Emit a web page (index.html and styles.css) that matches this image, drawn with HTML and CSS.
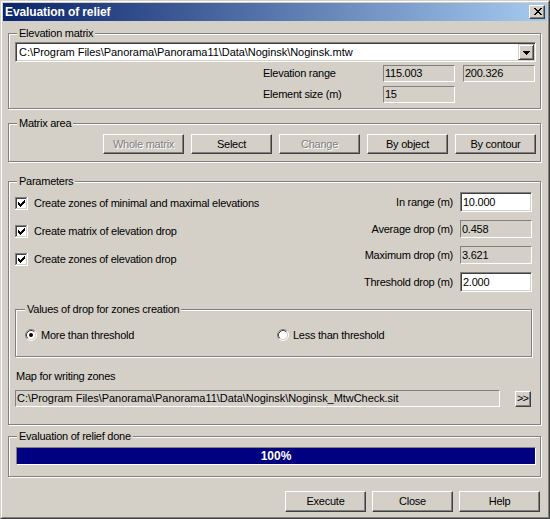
FILE: index.html
```html
<!DOCTYPE html>
<html>
<head>
<meta charset="utf-8">
<title>Evaluation of relief</title>
<link rel="stylesheet" href="styles.css">
</head>
<body>
<div class="window">
 <div class="frame">
  <div class="titlebar">
   <span class="title">Evaluation of relief</span>
   <span class="closebtn"><svg width="8" height="7" viewBox="0 0 8 7"><path d="M0 0h2v1h-2z M6 0h2v1h-2z M1 1h2v1h-2z M5 1h2v1h-2z M2 2h4v1h-4z M3 3h2v1h-2z M2 4h4v1h-4z M1 5h2v1h-2z M5 5h2v1h-2z M0 6h2v1h-2z M6 6h2v1h-2z" fill="#000"/></svg></span>
  </div>
  <div class="client">
   <div class="group g-elev">
    <span class="legend">Elevation matrix</span>
    <div class="combo">
     <span class="combo-text">C:\Program Files\Panorama\Panorama11\Data\Noginsk\Noginsk.mtw</span>
     <span class="combo-btn"><svg width="7" height="4" viewBox="0 0 7 4"><path d="M0 0h7v1h-7z M1 1h5v1h-5z M2 2h3v1h-3z M3 3h1v1h-1z" fill="#000"/></svg></span>
    </div>
    <div class="range-grid">
     <span class="lbl">Elevation range</span><span class="ro">115.003</span><span class="ro">200.326</span>
     <span class="lbl">Element size (m)</span><span class="ro">15</span>
    </div>
   </div>

   <div class="group g-area">
    <span class="legend">Matrix area</span>
    <div class="btnrow">
     <span class="btn disabled">Whole matrix</span>
     <span class="btn">Select</span>
     <span class="btn disabled">Change</span>
     <span class="btn">By object</span>
     <span class="btn">By contour</span>
    </div>
   </div>

   <div class="group g-params">
    <span class="legend">Parameters</span>
    <div class="params-top">
     <div class="checks">
      <div class="check"><svg class="cb" width="13" height="13" viewBox="0 0 13 13"><path d="M0 0H12V1H1V12H0Z" fill="#808080"/><path d="M12 0H13V13H0V12H12Z" fill="#fff"/><path d="M1 1H11V2H2V11H1Z" fill="#404040"/><path d="M11 1H12V12H1V11H11Z" fill="#D4D0C8"/><rect x="2" y="2" width="9" height="9" fill="#fff"/><path d="M9 3h1v1h-1z M8 4h2v1h-2z M3 5h1v1h-1z M7 5h3v1h-3z M3 6h2v1h-2z M6 6h3v1h-3z M3 7h5v1h-5z M4 8h3v1h-3z M5 9h1v1h-1z" fill="#000"/></svg><span>Create zones of minimal and maximal elevations</span></div>
      <div class="check"><svg class="cb" width="13" height="13" viewBox="0 0 13 13"><path d="M0 0H12V1H1V12H0Z" fill="#808080"/><path d="M12 0H13V13H0V12H12Z" fill="#fff"/><path d="M1 1H11V2H2V11H1Z" fill="#404040"/><path d="M11 1H12V12H1V11H11Z" fill="#D4D0C8"/><rect x="2" y="2" width="9" height="9" fill="#fff"/><path d="M9 3h1v1h-1z M8 4h2v1h-2z M3 5h1v1h-1z M7 5h3v1h-3z M3 6h2v1h-2z M6 6h3v1h-3z M3 7h5v1h-5z M4 8h3v1h-3z M5 9h1v1h-1z" fill="#000"/></svg><span>Create matrix of elevation drop</span></div>
      <div class="check"><svg class="cb" width="13" height="13" viewBox="0 0 13 13"><path d="M0 0H12V1H1V12H0Z" fill="#808080"/><path d="M12 0H13V13H0V12H12Z" fill="#fff"/><path d="M1 1H11V2H2V11H1Z" fill="#404040"/><path d="M11 1H12V12H1V11H11Z" fill="#D4D0C8"/><rect x="2" y="2" width="9" height="9" fill="#fff"/><path d="M9 3h1v1h-1z M8 4h2v1h-2z M3 5h1v1h-1z M7 5h3v1h-3z M3 6h2v1h-2z M6 6h3v1h-3z M3 7h5v1h-5z M4 8h3v1h-3z M5 9h1v1h-1z" fill="#000"/></svg><span>Create zones of elevation drop</span></div>
     </div>
     <div class="fields">
      <div class="frow tall"><span class="flbl">In range (m)</span><span class="in">10.000</span></div>
      <div class="frow"><span class="flbl">Average drop (m)</span><span class="ro wide">0.458</span></div>
      <div class="frow"><span class="flbl">Maximum drop (m)</span><span class="ro wide">3.621</span></div>
      <div class="frow tall"><span class="flbl">Threshold drop (m)</span><span class="in">2.000</span></div>
     </div>
    </div>

    <div class="group sub">
     <span class="legend sublegend">Values of drop for zones creation</span>
     <div class="radios">
      <div class="opt"><svg class="rb" width="12" height="12" viewBox="0 0 12 12"><circle cx="6" cy="6" r="4.5" fill="#fff"/><path d="M2.11 9.89 A5.5 5.5 0 0 1 9.89 2.11" fill="none" stroke="#808080"/><path d="M9.89 2.11 A5.5 5.5 0 0 1 2.11 9.89" fill="none" stroke="#fff"/><path d="M2.82 9.18 A4.5 4.5 0 0 1 9.18 2.82" fill="none" stroke="#404040"/><path d="M9.18 2.82 A4.5 4.5 0 0 1 2.82 9.18" fill="none" stroke="#D4D0C8"/><circle cx="6" cy="6" r="2" fill="#000"/></svg><span>More than threshold</span></div>
      <div class="opt"><svg class="rb" width="12" height="12" viewBox="0 0 12 12"><circle cx="6" cy="6" r="4.5" fill="#fff"/><path d="M2.11 9.89 A5.5 5.5 0 0 1 9.89 2.11" fill="none" stroke="#808080"/><path d="M9.89 2.11 A5.5 5.5 0 0 1 2.11 9.89" fill="none" stroke="#fff"/><path d="M2.82 9.18 A4.5 4.5 0 0 1 9.18 2.82" fill="none" stroke="#404040"/><path d="M9.18 2.82 A4.5 4.5 0 0 1 2.82 9.18" fill="none" stroke="#D4D0C8"/></svg><span>Less than threshold</span></div>
     </div>
    </div>

    <div class="maplbl">Map for writing zones</div>
    <div class="maprow">
     <span class="ro path">C:\Program Files\Panorama\Panorama11\Data\Noginsk\Noginsk_MtwCheck.sit</span>
     <span class="btn small">&gt;&gt;</span>
    </div>
   </div>

   <div class="group g-prog">
    <span class="legend">Evaluation of relief done</span>
    <div class="progress"><span>100%</span></div>
   </div>

   <div class="bottom">
    <span class="btn big">Execute</span>
    <span class="btn big">Close</span>
    <span class="btn big">Help</span>
   </div>
  </div>
 </div>
</div>
</body>
</html>
```

FILE: styles.css
```css
* { box-sizing: border-box; }
html, body { margin: 0; padding: 0; }
body {
  width: 550px;
  height: 519px;
  overflow: hidden;
  background: #D4D0C8;
  font-family: "Liberation Sans", Arial, sans-serif;
  font-size: 11px;
  letter-spacing: -0.25px;
  color: #000;
}
.window {
  width: 550px;
  height: 519px;
  background: #D4D0C8;
  border: 1px solid;
  border-color: #D4D0C8 #404040 #404040 #D4D0C8;
  display: flex;
  flex-direction: column;
}
.frame {
  flex: 1;
  border: 1px solid;
  border-color: #fff #808080 #808080 #fff;
  padding: 1px;
  display: flex;
  flex-direction: column;
}
.titlebar {
  height: 18px;
  flex: none;
  background: linear-gradient(to right, #0A246A, #A6CAF0);
  display: flex;
  align-items: center;
  justify-content: space-between;
  padding: 0 2px 0 2px;
}
.title {
  color: #fff;
  font-weight: bold;
  font-size: 12px;
  letter-spacing: -0.1px;
  line-height: 18px;
}
.closebtn {
  width: 16px;
  height: 14px;
  background: #D4D0C8;
  border: 1px solid;
  border-color: #fff #404040 #404040 #fff;
  box-shadow: inset -1px -1px #808080;
  display: flex;
  align-items: flex-start;
  justify-content: center;
  padding-top: 2px;
  padding-left: 1px;
}
.client {
  flex: 1;
  display: flex;
  flex-direction: column;
  padding-left: 5px;
}

/* group boxes (etched) */
.group {
  position: relative;
  flex: none;
  width: 533px;
  border: 1px solid #808080;
  box-shadow: inset 1px 1px #fff, 1px 1px #fff;
}
.legend {
  position: absolute;
  top: -7px;
  left: 8px;
  padding: 0 2px;
  line-height: 13px;
  background: #D4D0C8;
  white-space: nowrap;
}
.g-elev {
  margin-top: 12px;
  height: 76px;
  padding: 8px 4px 0 6px;
}
.combo {
  width: 521px;
  height: 20px;
  background: #fff;
  border: 1px solid;
  border-color: #808080 #fff #fff #808080;
  box-shadow: inset 1px 1px #404040, inset -1px -1px #D4D0C8;
  padding: 1px;
  display: flex;
  align-items: center;
  justify-content: space-between;
}
.combo-text {
  padding-left: 2px;
  letter-spacing: -0.05px;
  line-height: 16px;
  white-space: nowrap;
}
.combo-btn {
  width: 16px;
  height: 16px;
  background: #D4D0C8;
  border: 1px solid;
  border-color: #D4D0C8 #404040 #404040 #D4D0C8;
  box-shadow: inset 1px 1px #fff, inset -1px -1px #808080;
  display: flex;
  align-items: center;
  justify-content: center;
  padding-top: 1px;
}
.range-grid {
  margin-top: 3px;
  margin-left: 248px;
  display: grid;
  grid-template-columns: 112px 72px 72px;
  grid-auto-rows: 17px;
  column-gap: 8px;
  row-gap: 4px;
}
.lbl { line-height: 17px; white-space: nowrap; }
.ro {
  height: 17px;
  border: 1px solid;
  border-color: #808080 #fff #fff #808080;
  padding-left: 1px;
  line-height: 15px;
  white-space: nowrap;
  overflow: hidden;
}
.ro.wide { width: 72px; height: 18px; line-height: 16px; }

/* buttons */
.btn {
  display: flex;
  align-items: center;
  justify-content: center;
  background: #D4D0C8;
  border: 1px solid;
  border-color: #fff #404040 #404040 #fff;
  box-shadow: inset -1px -1px #808080;
  white-space: nowrap;
  line-height: 13px;
}
.btn.disabled {
  color: #808080;
  text-shadow: 1px 1px 0 #fff;
}
.g-area {
  margin-top: 14px;
  height: 39px;
  padding: 10px 4px 0 6px;
}
.btnrow {
  display: flex;
  justify-content: flex-end;
  gap: 7px;
}
.btnrow .btn { width: 81px; height: 20px; }

/* parameters */
.g-params {
  margin-top: 19px;
  height: 244px;
  padding: 10px 8px 0 6px;
}
.params-top {
  display: flex;
  justify-content: space-between;
  align-items: flex-start;
}
.checks {
  padding-top: 5px;
  display: flex;
  flex-direction: column;
  gap: 15px;
}
.check {
  display: flex;
  align-items: center;
  height: 13px;
  gap: 6px;
  white-space: nowrap;
  line-height: 13px;
}
.cb, .rb { flex: none; display: block; }
.fields {
  display: flex;
  flex-direction: column;
  gap: 8px;
}
.frow {
  display: flex;
  align-items: center;
  justify-content: flex-end;
  gap: 7px;
  height: 18px;
}
.frow.tall { height: 20px; }
.flbl { white-space: nowrap; line-height: 13px; }
.in {
  width: 72px;
  height: 20px;
  background: #fff;
  border: 1px solid;
  border-color: #808080 #fff #fff #808080;
  box-shadow: inset 1px 1px #404040, inset -1px -1px #D4D0C8;
  padding-left: 2px;
  line-height: 18px;
}
.sub {
  width: 517px;
  margin-top: 17px;
  height: 48px;
  padding: 19px 0 0 9px;
}
.sublegend { left: 9px; }
.radios {
  display: flex;
  align-items: center;
}
.opt {
  display: flex;
  align-items: center;
  gap: 4px;
  height: 12px;
  line-height: 13px;
  white-space: nowrap;
}
.opt:first-child { width: 252px; }
.maplbl {
  margin-top: 13px;
  padding-left: 1px;
  line-height: 13px;
}
.maprow {
  margin-top: 7px;
  display: flex;
  align-items: center;
  justify-content: space-between;
}
.ro.path {
  width: 485px;
  padding-left: 1px;
  letter-spacing: -0.05px;
}
.btn.small {
  width: 16px;
  height: 16px;
  margin-right: 1px;
  letter-spacing: -1px;
  padding-right: 1px;
}

/* progress */
.g-prog {
  margin-top: 11px;
  height: 41px;
  padding: 10px 4px 0 7px;
}
.progress {
  width: 520px;
  height: 18px;
  border: 1px solid;
  border-color: #808080 #fff #fff #808080;
  background: #000080;
  display: flex;
  align-items: center;
  justify-content: center;
}
.progress span {
  color: #fff;
  font-weight: bold;
  font-size: 12px;
  letter-spacing: 0;
  line-height: 16px;
}

/* bottom buttons */
.bottom {
  margin-top: 14px;
  display: flex;
  justify-content: flex-end;
  gap: 6px;
  padding-right: 7px;
}
.btn.big { width: 81px; height: 21px; }
```
